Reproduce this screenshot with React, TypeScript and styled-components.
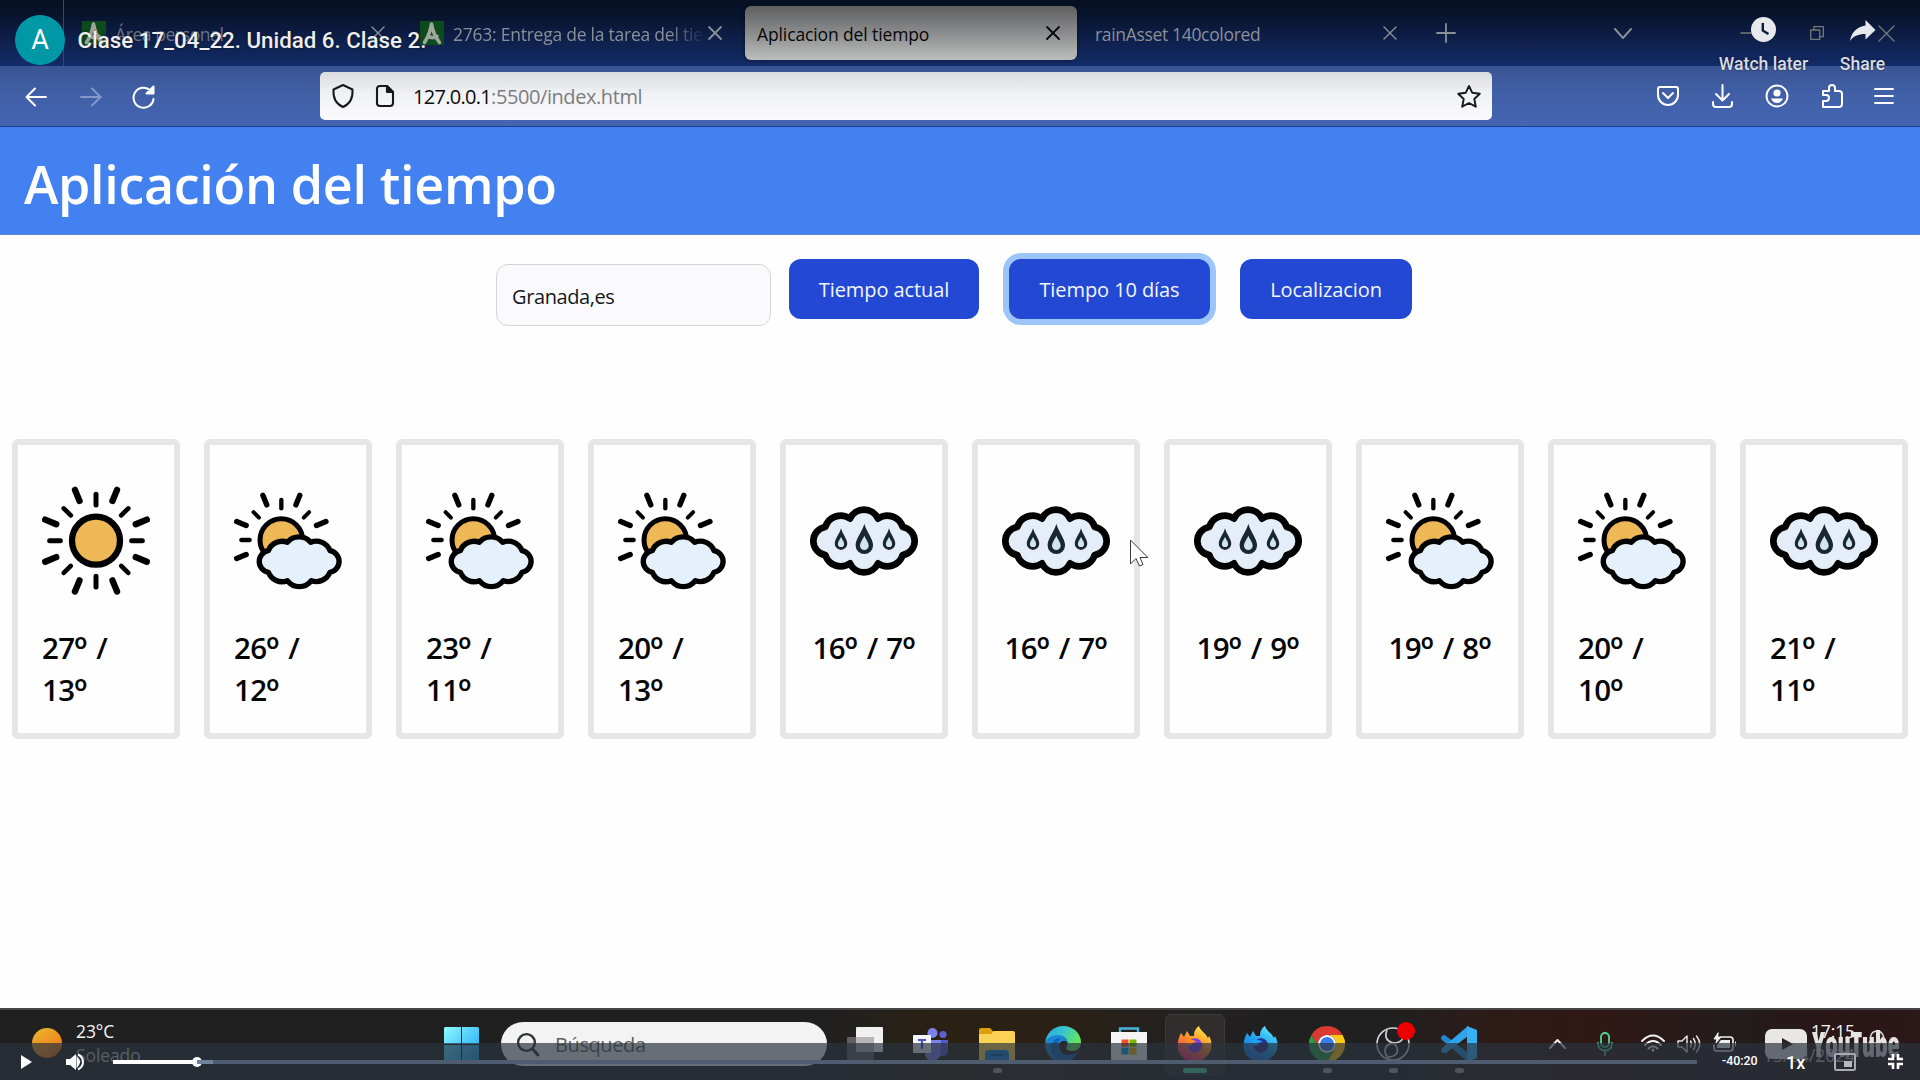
import React from 'react';
import styled, { createGlobalStyle } from 'styled-components';

const ui = '"Open Sans", "Noto Sans", sans-serif';
const player = 'Roboto, "Open Sans", sans-serif';

const Global = createGlobalStyle`
  *, *::before, *::after { box-sizing: border-box; }
  body { margin: 0; background: #fff; font-family: ${ui}; overflow: hidden; }
  svg { display: block; flex: none; overflow: visible; }
`;

const Screen = styled.div`
  position: relative;
  display: flex;
  flex-direction: column;
  width: 1920px;
  height: 1080px;
  overflow: hidden;
  background: #fefefe;
`;

/* ---------- browser tabs ---------- */
const TabStrip = styled.div`
  display: flex;
  align-items: flex-start;
  height: 66px;
  padding-left: 63px;
  background: linear-gradient(#061022 0%, #08142d 22%, #0e1f4a 60%, #132c69 100%);
`;
const Tab = styled.div<{ $w: number; $pad?: number; $active?: boolean; $line?: boolean }>`
  display: flex;
  align-items: center;
  width: ${p => p.$w}px;
  height: ${p => (p.$active ? 54 : 66)}px;
  margin-top: ${p => (p.$active ? 6 : 0)}px;
  padding-left: ${p => p.$pad ?? 12}px;
  border-left: ${p => (p.$line ? '1px solid #36486f' : '0')};
  border-radius: ${p => (p.$active ? 6 : 0)}px;
  background: ${p => (p.$active ? 'linear-gradient(#5f5f60, #8b8c8d 50%, #bcbfbe)' : 'none')};
  box-shadow: ${p => (p.$active ? '0 0 4px rgba(0,0,0,.5)' : 'none')};
  color: ${p => (p.$active ? '#060606' : '#8a909a')};
`;
const TabTitle = styled.span<{ $dim?: boolean; $ls: number; $fade?: boolean }>`
  flex: 1;
  min-width: 0;
  padding-top: 2px;
  overflow: hidden;
  white-space: nowrap;
  font-size: 17.5px;
  line-height: 26px;
  letter-spacing: ${p => p.$ls}px;
  color: ${p => (p.$dim ? '#6d7380' : 'inherit')};
  ${p => p.$fade && 'mask-image: linear-gradient(90deg, #000 86%, transparent 101%);'}
`;
const Favicon = styled.span`
  display: flex;
  align-items: center;
  justify-content: center;
  width: 24px;
  height: 24px;
  margin-right: 9px;
  background: #0d4a1c;
`;
const CloseBox = styled.span<{ $r: number }>`
  margin: 0 ${p => p.$r}px 0 6px;
`;
const StripIcons = styled.div`
  display: flex;
  align-items: center;
  height: 66px;
  flex: 1;
`;
const Gap = styled.span<{ $w: number }>`
  flex: none;
  width: ${p => p.$w}px;
`;

/* ---------- toolbar ---------- */
const Toolbar = styled.div`
  display: flex;
  align-items: center;
  height: 61px;
  padding: 0 27px 0 23px;
  border-bottom: 1px solid #1a3c93;
  background: linear-gradient(#3a5592, #4160a8 50%, #4564b2);
`;
const NavGroup = styled.div`
  display: flex;
  align-items: center;
  gap: 28.5px;
  width: 297px;
  padding-top: 2px;
`;
const UrlBar = styled.div`
  display: flex;
  align-items: center;
  width: 1172px;
  height: 48px;
  padding: 0 11px 0 12px;
  border-radius: 5px;
  background: linear-gradient(#dadddf, #f0f1f4 45%, #fbfbfe);
`;
const Url = styled.span`
  flex: 1;
  margin-left: 19px;
  padding-top: 2px;
  font-size: 20px;
  line-height: 28px;
  letter-spacing: -0.42px;
  color: #7c7d80;
  b { font-weight: 400; color: #0b0b0c; letter-spacing: -0.7px; }
`;
const ToolGroup = styled.div`
  display: flex;
  align-items: center;
  justify-content: space-between;
  flex: 1;
  margin-left: 165px;
`;

/* ---------- page ---------- */
const Page = styled.main`
  display: flex;
  flex-direction: column;
  flex: 1;
`;
const Header = styled.header`
  display: flex;
  align-items: center;
  height: 108px;
  padding: 0 24px;
  background: #4481f0;
  border-bottom: 1px solid #5b85cf;
`;
const Title = styled.h1`
  margin: 6px 0 0;
  font-size: 52px;
  font-weight: 600;
  line-height: 72px;
  letter-spacing: -0.32px;
  color: #fff;
`;
const Controls = styled.form`
  display: flex;
  align-items: flex-start;
  justify-content: flex-start;
  gap: 30px;
  height: 92px;
  padding: 24px 0 0 496px;
`;
const CityInput = styled.div`
  display: flex;
  align-items: center;
  width: 275px;
  height: 62px;
  margin: 5px -12px 0 0;
  padding: 2px 15px 0;
  border: 1px solid #d4d5d9;
  border-radius: 12px;
  background: #fafafd;
  font-size: 20px;
  letter-spacing: -0.4px;
  color: #15181f;
`;
const Button = styled.button<{ $w: number; $focus?: boolean }>`
  width: ${p => p.$w}px;
  height: 60px;
  padding: 1px 0 0;
  border: 0;
  border-radius: 12px;
  background: #2348d3;
  box-shadow: ${p => (p.$focus ? '0 0 0 6px #9cc5f9' : 'none')};
  font: 400 20px ${ui};
  letter-spacing: -0.08px;
  color: #f3f6fd;
`;
const Cards = styled.section`
  display: grid;
  grid-template-columns: repeat(10, 168px);
  gap: 24px;
  padding: 0 12px;
  margin-top: 112px;
`;
const Card = styled.article`
  display: flex;
  flex-direction: column;
  align-items: center;
  height: 300px;
  padding: 42px 24px 0;
  border: 6px solid #e6e6e8;
  border-radius: 6px;
`;
const Temp = styled.p`
  margin: 32px 0 0;
  font-size: 29.5px;
  font-weight: 600;
  line-height: 42px;
  letter-spacing: -0.7px;
  word-spacing: 1.8px;
  color: #050505;
`;
const Ring = styled.span`
  font-size: 1.16em;
  line-height: 0;
  letter-spacing: 0;
  vertical-align: -0.09em;
`;

/* ---------- taskbar ---------- */
const Taskbar = styled.footer`
  display: flex;
  align-items: flex-start;
  height: 72px;
  border-top: 2px solid #464546;
  background: linear-gradient(90deg, #202020 0 43%, #2a2013 49%, #2b2014 54%, #222020 62%, #202020 72%, #2e1b18 78%, #301815 83%, #231c1c 90%, #2b1617 96%, #2c1819 100%);
`;
const Slot = styled.div<{ $ml?: number; $mt?: number }>`
  flex: none;
  margin-left: ${p => p.$ml ?? 0}px;
  margin-top: ${p => p.$mt ?? 0}px;
`;
const SunDot = styled.div`
  width: 30px;
  height: 30px;
  border-radius: 50%;
  background: linear-gradient(150deg, #e8b92c, #f08a20 60%, #e8641e);
`;
const Stack = styled.div<{ $right?: boolean; $mt: number; $ml: number; $w: number }>`
  display: flex;
  flex: none;
  flex-direction: column;
  align-items: ${p => (p.$right ? 'flex-end' : 'flex-start')};
  width: ${p => p.$w}px;
  margin: ${p => p.$mt}px 0 0 ${p => p.$ml}px;
  font-size: 17.5px;
  line-height: 24px;
  letter-spacing: -0.1px;
  color: #f4f4f4;
`;
const Muted = styled.span`
  color: #bdbdbd;
`;
const Search = styled.div`
  display: flex;
  flex: none;
  align-items: center;
  width: 326px;
  height: 44px;
  margin: 12px 0 0 22px;
  padding-left: 16px;
  border-radius: 22px;
  background: #f3f3f3;
  color: #5e6063;
  font-size: 20px;
  letter-spacing: -0.4px;
  gap: 16px;
`;
const Apps = styled.div`
  display: flex;
  margin-left: 15px;
`;
const AppTile = styled.div<{ $open?: boolean; $active?: boolean }>`
  display: flex;
  flex-direction: column;
  align-items: center;
  width: 60px;
  height: 61px;
  margin: 4px 3px 0;
  padding-top: 11px;
  border-radius: 6px;
  background: ${p => (p.$active ? '#302d2c' : 'none')};
  border: 1px solid ${p => (p.$active ? '#3c3939' : 'transparent')};
  &::after {
    content: '';
    width: ${p => (p.$active ? 24 : p.$open ? 9 : 0)}px;
    height: 5px;
    margin-top: 6px;
    border-radius: 3px;
    background: ${p => (p.$active ? '#44d29c' : '#a0a0a0')};
  }
`;
const Tray = styled.div`
  display: flex;
  flex: none;
  align-items: flex-start;
  margin-left: 53px;
`;

/* ---------- video player overlay ---------- */
const Chrome = styled.div`
  position: absolute;
  top: 0;
  left: 15px;
  right: 35px;
  display: flex;
  align-items: flex-start;
  font-family: ${player};
  color: #eeeeee;
`;
const Avatar = styled.div`
  display: flex;
  align-items: center;
  justify-content: center;
  width: 50px;
  height: 50px;
  margin: 15px 12.5px 0 0;
  border-radius: 50%;
  background: #0097a7;
  font-size: 27px;
  color: #fff;
`;
const VideoTitle = styled.span`
  flex: 1;
  margin-top: 25px;
  font-size: 22.3px;
  font-weight: 500;
  line-height: 30px;
  text-shadow: 0 0 2px rgba(0, 0, 0, 0.5);
`;
const Action = styled.div<{ $w: number; $ml?: number }>`
  display: flex;
  flex-direction: column;
  align-items: center;
  width: ${p => p.$w}px;
  margin: 17px 0 0 ${p => p.$ml ?? 0}px;
  font-size: 17.6px;
  font-weight: 500;
  line-height: 24px;
  white-space: nowrap;
  color: #d9dbe0;
  text-shadow: 0 0 2px rgba(0, 0, 0, 0.6);
  svg { margin-bottom: 10px; }
`;
const Brand = styled.div`
  position: absolute;
  left: 1765px;
  top: 1024px;
  display: flex;
  align-items: center;
  gap: 5px;
`;
const Wordmark = styled.span`
  font-size: 35px;
  font-weight: 800;
  font-stretch: 75%;
  line-height: 40px;
  letter-spacing: -0.5px;
  color: #e6e3e3;
  transform: scaleX(0.72);
  transform-origin: left;
`;
const ControlBar = styled.div`
  position: absolute;
  left: 0;
  right: 0;
  bottom: 0;
  height: 37px;
  display: flex;
  align-items: center;
  background: rgba(42, 51, 62, 0.69);
  font-family: ${player};
  color: #fff;
`;
const Track = styled.div`
  display: flex;
  align-items: center;
  width: 1584px;
  height: 4px;
  margin-left: 29px;
  background: #4f5c70;
`;
const Played = styled.i`
  width: 84px;
  height: 4px;
  background: #fff;
`;
const Knob = styled.i`
  width: 10px;
  height: 10px;
  margin: 1px -5px 0;
  border-radius: 50%;
  background: #fff;
`;
const Buffered = styled.i`
  width: 16px;
  height: 4px;
  background: #70829c;
`;
const Remaining = styled.span`
  width: 36px;
  margin: -2px 0 0 25px;
  font-size: 12.4px;
  font-weight: 500;
`;
const Speed = styled.span`
  width: 20px;
  margin: 1px 0 0 28px;
  font-size: 18px;
  font-weight: 500;
`;
const Pointer = styled.div`
  position: absolute;
  left: 1130px;
  top: 540px;
`;

/* ---------- icons ---------- */
const Svg = ({ w, h, vb, sw = 1.8, children }: { w: number; h: number; vb?: string; sw?: number; children: React.ReactNode }) => (
  <svg width={w} height={h} viewBox={vb ?? `0 0 ${w} ${h}`} fill="none" stroke="currentColor" strokeWidth={sw} strokeLinecap="round" strokeLinejoin="round">
    {children}
  </svg>
);
const X = ({ s = 12, sw = 1.8 }: { s?: number; sw?: number }) => (
  <Svg w={s} h={s} vb="0 0 12 12" sw={sw}><path d="M0 0L12 12M12 0L0 12" /></Svg>
);
const Leaf = () => (
  <Svg w={18} h={22} sw={3.6}><path d="M1.5 20.5Q7 12 8.5 2Q10 12 16.5 20.5M5 14Q9 17 14 14.5" stroke="#9fa69d" /></Svg>
);

const rays = (list: number[], a: number, b: number, w: number, cx: number, cy: number) =>
  list.map(d => {
    const t = (d * Math.PI) / 180;
    const s = Math.sin(t), c = -Math.cos(t);
    return <line key={d} x1={cx + a * s} y1={cy + a * c} x2={cx + b * s} y2={cy + b * c} strokeWidth={w} />;
  });

const Sun = () => (
  <Svg w={108} h={108} vb="0 0 324 324">
    <g stroke="#000">
      <circle cx="162" cy="161" r="72" fill="#edb855" strokeWidth="19" />
      {rays([0, 90, 180, 270], 107, 139, 15, 162, 161)}
      {rays([45, 135, 225, 315], 107, 137, 14, 162, 161)}
      {rays([22.5, 67.5, 112.5, 157.5, 202.5, 247.5, 292.5, 337.5], 129, 165, 19, 162, 161)}
    </g>
  </Svg>
);
const SunCloud = () => (
  <Svg w={108} h={108} vb="0 0 324 324">
    <g stroke="#000">
      <circle cx="142" cy="159" r="64" fill="#edb855" strokeWidth="15" />
      {rays([0, 270], 95, 120, 13, 142, 159)}
      {rays([45, 315], 95, 118, 12, 142, 159)}
      {rays([22.5, 67.5, 247.5, 292.5, 337.5], 114, 145, 16, 142, 159)}
      <path d="M160 166A46 46 0 0 1 230 166A44 44 0 0 1 288 191A33 33 0 0 1 288 256A44 44 0 0 1 232 281A45 45 0 0 1 160 281A44 44 0 0 1 103 256A33 33 0 0 1 103 191A44 44 0 0 1 160 166Z" fill="#e5f0fa" strokeWidth="16" />
    </g>
  </Svg>
);
const Drop = ({ x, y, s }: { x: number; y: number; s: number }) => (
  <g transform={`translate(${x} ${y}) scale(${s})`} stroke="none">
    <path d="M0 0C6 24 26 44 26 64A26 26 0 0 1-26 64C-26 44-6 24 0 0Z" fill="#1c2631" />
    <path d="M0 36C4 46 13 56 13 65A13 13 0 0 1-13 65C-13 56-4 46 0 36Z" fill="#cfe6ef" />
  </g>
);
const Rain = () => (
  <Svg w={108} h={108} vb="0 0 324 324">
    <path d="M120 95A46 46 0 0 1 204 95A48 48 0 0 1 278 120A42.500 42.500 0 0 1 278 204A48 48 0 0 1 204 229A46 46 0 0 1 120 229A48 48 0 0 1 46 204A42.500 42.500 0 0 1 46 120A48 48 0 0 1 120 95Z" fill="#e5eef8" stroke="#000" strokeWidth="20" />
    <Drop x={93} y={124} s={0.72} />
    <Drop x={163} y={110} s={1.01} />
    <Drop x={237} y={124} s={0.72} />
  </Svg>
);

const icons = { sun: Sun, cloud: SunCloud, rain: Rain };
const days: [keyof typeof icons, string, string][] = [
  ['sun', '27', '13'], ['cloud', '26', '12'], ['cloud', '23', '11'], ['cloud', '20', '13'], ['rain', '16', '7'],
  ['rain', '16', '7'], ['rain', '19', '9'], ['cloud', '19', '8'], ['cloud', '20', '10'], ['rain', '21', '11'],
];

const Teams = () => (
  <svg width="36" height="36" viewBox="0 0 36 36">
    <circle cx="19.5" cy="7" r="5" fill="#7b83eb" /><circle cx="30" cy="8.500" r="3.600" fill="#5b62c8" />
    <path d="M24 14h11v11a5 5 0 0 1-9 3z" fill="#5059c9" /><path d="M12 14h16v12a8.500 8.500 0 0 1-16 4z" fill="#7b83eb" />
    <rect x="0" y="9" width="18" height="18" rx="1" fill="#f3f3fa" /><path d="M5 14h8M9 14v9" stroke="#4b53bc" strokeWidth="2.200" />
  </svg>
);
const Folder = () => (
  <svg width="36" height="36" viewBox="0 0 36 36">
    <path d="M0 4q0-2 2-2h9l4 4v8H0z" fill="#dd9f0d" /><path d="M0 8h12l3-3h19q2 0 2 2v27H0z" fill="#fbd254" />
    <path d="M6 34v-6q0-4 4-4h16q4 0 4 4v6z" fill="#1583d4" /><path d="M12 29h12" stroke="#0c5ba0" strokeWidth="2" />
  </svg>
);
const Edge = () => (
  <svg width="36" height="36" viewBox="0 0 36 36">
    <defs>
      <linearGradient id="eg" x1="0" y1="0" x2="1" y2="0.4"><stop offset="0" stopColor="#2aa4e4" /><stop offset=".5" stopColor="#37c4d2" /><stop offset="1" stopColor="#65e65a" /></linearGradient>
    </defs>
    <path d="M0 17C1 7 9 0 18 0c11 0 18 8 18 16 0 6-4 9-9 9-4 0-7-2-5-5 2-5-1-10-8-10C7 10 2 12 0 17z" fill="url(#eg)" />
    <path d="M0 18c1-5 6-9 13-9 6 0 9 4 9 7-3-2-7-1-8 3-1 5 3 10 9 10 4 0 8-1 10-3-3 6-9 10-15 10C8 36 0 28 0 18z" fill="#1c86d6" />
    <path d="M13 12c-5 2-8 7-7 13 1 6 6 11 12 11 6 0 12-4 15-10-2 2-6 3-10 3-7 0-11-5-10-10 0-3 1-5 3-6z" fill="#1464b4" />
  </svg>
);
const Store = () => (
  <svg width="36" height="36" viewBox="0 0 36 36">
    <path d="M9 8V2.500h18V8" fill="none" stroke="#46b4dc" strokeWidth="2.400" /><path d="M0 6h36v26q0 4-4 4H4q-4 0-4-4z" fill="#f5f5f5" />
    <path d="M10.500 13.500h7v7h-7z" fill="#f25022" /><path d="M18.500 13.500h7v7h-7z" fill="#7fba00" /><path d="M10.500 21.500h7v7h-7z" fill="#00a4ef" /><path d="M18.500 21.500h7v7h-7z" fill="#ffb900" />
  </svg>
);
const Fox = ({ id, a, b, c, core }: { id: string; a: string; b: string; c: string; core: string }) => (
  <svg width="36" height="36" viewBox="0 0 36 36">
    <defs><linearGradient id={id} x1=".8" y1="0" x2=".3" y2="1"><stop offset="0" stopColor={a} /><stop offset=".5" stopColor={b} /><stop offset="1" stopColor={c} /></linearGradient></defs>
    <path d="M4 7l3 4 3-6 3 5h4c0-5 2-8 5-10 1 4 5 6 7 9l2 3 1-2c4 7 3 14-1 19-6 8-20 9-27 1C-1 24 0 14 4 7z" fill={`url(#${id})`} />
    <circle cx="18" cy="19.500" r="7.200" fill={core} /><path d="M9 15q6-3 11 1-5 0-6 4-4 0-5-5z" fill={b} />
  </svg>
);
const ChromeLogo = () => (
  <svg width="36" height="36" viewBox="0 0 36 36">
    <path d="M2.400 9A18 18 0 0 1 33.600 9H18a9 9 0 0 0-7.800 13.500z" fill="#db3a30" />
    <path d="M33.600 9A18 18 0 0 1 18 36l7.800-13.500A9 9 0 0 0 18 9z" fill="#fbc917" />
    <path d="M18 36A18 18 0 0 1 2.400 9l7.800 13.500a9 9 0 0 0 15.600 0z" fill="#2a9c48" />
    <circle cx="18" cy="18" r="9" fill="#fff" /><circle cx="18" cy="18" r="7" fill="#3a7be8" />
  </svg>
);
const Obs = () => (
  <svg width="36" height="36" viewBox="0 0 36 36">
    <circle cx="18" cy="18" r="16" fill="#1f1e20" stroke="#d5d5d5" strokeWidth="1.600" />
    <path d="M12 4q-4 10 6 13 8 0 10-5M18 17q-7 1-8 7 0 5 4 8M18 17q6 4 4 10-3 4-8 4" fill="none" stroke="#c9c9c9" strokeWidth="1.800" />
    <circle cx="31" cy="5" r="9" fill="#ee0000" />
  </svg>
);
const Code = () => (
  <svg width="36" height="36" viewBox="0 0 36 36">
    <path d="M1 10q2-2 4-0L27 27V36L1 14q-2-2 0-4z" fill="#1f8ad2" />
    <path d="M27 0v10L5 27q-2 1-4-1-2-2 0-4z" fill="#2fa4ea" /><path d="M26 0l10 4v28l-10 4z" fill="#36b0f2" />
  </svg>
);

export default function App() {
  return (
    <Screen>
      <Global />
      <TabStrip>
        <Tab $w={345} $pad={18} $line>
          <Favicon><Leaf /></Favicon>
          <TabTitle $dim $ls={-0.4}>Área personal</TabTitle>
          <CloseBox $r={24}><X sw={1.4} /></CloseBox>
        </Tab>
        <Tab $w={337}>
          <Favicon><Leaf /></Favicon>
          <TabTitle $ls={-0.24} $fade>2763: Entrega de la tarea del tie</TabTitle>
          <CloseBox $r={24}><X /></CloseBox>
        </Tab>
        <Tab $w={332} $active>
          <TabTitle $ls={-0.12}>Aplicacion del tiempo</TabTitle>
          <CloseBox $r={18}><X /></CloseBox>
        </Tab>
        <Tab $w={336} $pad={18}>
          <TabTitle $ls={-0.33}>rainAsset 140colored</TabTitle>
          <CloseBox $r={17}><X sw={1.4} /></CloseBox>
        </Tab>
        <StripIcons>
          <Gap $w={24} />
          <Svg w={18} h={18} sw={1.8}><g stroke="#8a9096"><path d="M9 0V18M0 9H18" /></g></Svg>
          <Gap $w={160} />
          <Svg w={16} h={9} sw={1.9}><path d="M0 0L8 9L16 0" stroke="#8a9096" /></Svg>
          <Gap $w={110} />
          <Svg w={14} h={2} sw={1.3}><path d="M0 1H14" stroke="#747a78" /></Svg>
          <Gap $w={55} />
          <Svg w={14} h={14} sw={1.3}><path d="M.7 4h9v9.400h-9zM4 4V.7h9.300v10H10" stroke="#747a78" /></Svg>
          <Gap $w={55} />
          <Svg w={15} h={15} sw={1.3}><path d="M0 0L15 15M15 0L0 15" stroke="#747a78" /></Svg>
        </StripIcons>
      </TabStrip>

      <Toolbar>
        <NavGroup>
          <Svg w={26} h={22} sw={2}><path d="M3.500 11H23M12 2.500L3.500 11L12 19.500" stroke="#fff" /></Svg>
          <Svg w={26} h={22} sw={2}><path d="M3 11H23M14 2.500L22.500 11L14 19.500" stroke="#8399cb" /></Svg>
          <Svg w={24} h={24} sw={2}><path d="M21.500 14A10 10 0 1 1 18.500 5.500L21 8M21.500 1.500V8.500H14.500Z" stroke="#fff" /><path d="M21.500 2v6.500H15z" fill="#fff" stroke="none" /></Svg>
        </NavGroup>
        <UrlBar>
          <Svg w={22} h={24} sw={2}><path d="M11 1L20.500 5.500C21 13 18 20 11 23C4 20 1 13 1.500 5.500Z" stroke="#17181c" /></Svg>
          <Gap $w={22} />
          <Svg w={18} h={22} sw={2.1}><path d="M11 1H4Q1 1 1 4V18Q1 21 4 21H14Q17 21 17 18V7Z" stroke="#17181c" /><path d="M11 1V7H17Z" fill="#17181c" stroke="#17181c" /></Svg>
          <Url><b>127.0.0.1</b>:5500/index.html</Url>
          <Svg w={24} h={23} sw={1.9}><path d="M12 1L15.300 7.800L22.800 8.800L17.300 14L18.800 21.700L12 18L5.200 21.700L6.700 14L1.200 8.800L8.700 7.800Z" stroke="#17181c" /></Svg>
        </UrlBar>
        <ToolGroup>
          <Svg w={22} h={20} sw={2}><g stroke="#fff"><path d="M3 1H19Q21 1 21 3V9A10 10 0 0 1 1 9V3Q1 1 3 1Z" /><path d="M6 7L11 12L16 7" /></g></Svg>
          <Svg w={21} h={24} sw={2}><path d="M10.500 1V16M4 10L10.500 16.500L17 10M1 18V20Q1 23 4 23H17Q20 23 20 20V18" stroke="#fff" /></Svg>
          <Svg w={24} h={24} sw={1.9}><g stroke="#fff"><circle cx="12" cy="12" r="10.500" /><circle cx="12" cy="9" r="3.600" fill="#fff" stroke="none" /><path d="M6 14.500H18Q16 19 12 19Q8 19 6 14.500Z" fill="#fff" stroke="none" /></g></Svg>
          <Svg w={21} h={24} sw={2}><path d="M1 7H7V4A3 3 0 0 1 13 4V7H17Q20 7 20 10V20Q20 23 17 23H1V17H4A3 3 0 0 0 4 11H1Z" stroke="#fff" /></Svg>
          <Svg w={18} h={17} sw={1.9}><path d="M0 1H18M0 8H18M0 15H18" stroke="#fff" /></Svg>
        </ToolGroup>
      </Toolbar>

      <Page>
        <Header><Title>Aplicación del tiempo</Title></Header>
        <Controls onSubmit={e => e.preventDefault()}>
          <CityInput>Granada,es</CityInput>
          <Button type="button" $w={190}>Tiempo actual</Button>
          <Button type="button" $w={201} $focus>Tiempo 10 días</Button>
          <Button type="button" $w={172}>Localizacion</Button>
        </Controls>
        <Cards>
          {days.map(([kind, hi, lo], i) => {
            const Icon = icons[kind];
            return <Card key={i}><Icon /><Temp>{hi}<Ring>º</Ring> / {lo}<Ring>º</Ring></Temp></Card>;
          })}
        </Cards>
      </Page>

      <Taskbar>
        <Slot $ml={32} $mt={18}><SunDot /></Slot>
        <Stack $mt={9} $ml={14} $w={368}><span>23°C</span><Muted>Soleado</Muted></Stack>
        <Slot $mt={17}>
          <svg width="35" height="35" viewBox="0 0 35 35">
            <defs><linearGradient id="win" x1="0" y1="0" x2="1" y2="1"><stop offset="0" stopColor="#8ffaff" /><stop offset=".5" stopColor="#50cdfa" /><stop offset="1" stopColor="#1d9cea" /></linearGradient></defs>
            <path d="M1 0H17V17H0V1zM18 0H34L35 1V17H18zM0 18H17V35H1L0 34zM18 18H35V34L34 35H18z" fill="url(#win)" />
          </svg>
        </Slot>
        <Search>
          <Svg w={22} h={23} sw={2.4}><g stroke="#2f3236"><circle cx="9.500" cy="9.500" r="8.400" /><path d="M15.500 16L21 22" strokeWidth="3" /></g></Svg>
          Búsqueda
        </Search>
        <Slot $ml={20} $mt={17}>
          <svg width="36" height="36" viewBox="0 0 36 36"><rect x="0" y="10" width="27" height="24" rx="1" fill="#5f5f5f" /><rect x="9" y="0" width="27" height="25" rx="1" fill="#f0f0f0" /><rect x="9" y="10" width="18" height="15" fill="#b5b5b5" /></svg>
        </Slot>
        <Apps>
          <AppTile><Teams /></AppTile>
          <AppTile $open><Folder /></AppTile>
          <AppTile><Edge /></AppTile>
          <AppTile><Store /></AppTile>
          <AppTile $active><Fox id="fx" a="#fff04a" b="#ff8a28" c="#e8267c" core="#7a3fe0" /></AppTile>
          <AppTile><Fox id="fd" a="#5ff0ff" b="#1f9ff0" c="#1c68d8" core="#2a2f8c" /></AppTile>
          <AppTile $open><ChromeLogo /></AppTile>
          <AppTile $open><Obs /></AppTile>
          <AppTile $open><Code /></AppTile>
        </Apps>
        <Tray>
          <Slot $ml={5} $mt={30}><Svg w={15} h={8} sw={1.9}><path d="M0 8L7.500 0L15 8" stroke="#efefef" /></Svg></Slot>
          <Slot $ml={32} $mt={22}><Svg w={16} h={24} sw={1.8}><g stroke="#4fd69c"><rect x="4" y="1" width="8" height="14" rx="4" /><path d="M1 11Q1 18.500 8 18.500Q15 18.500 15 11M8 19V23" /></g></Svg></Slot>
          <Slot $ml={28} $mt={24}><Svg w={24} h={18} sw={2}><g stroke="#f2f2f2"><path d="M1 7Q12-4 23 7M4 11Q12 3 20 11M7.500 14.500Q12 10 16.500 14.500" /><circle cx="12" cy="16" r="1.500" fill="#f2f2f2" stroke="none" /></g></Svg></Slot>
          <Slot $ml={12} $mt={24}><Svg w={24} h={20} sw={1.5}><g stroke="#e4e4e4"><path d="M1 7H5L10 2V18L5 13H1ZM13.500 7Q15.500 10 13.500 13M16.500 4.500Q20 10 16.500 15.500M19.500 2Q26 10 19.500 18" /></g></Svg></Slot>
          <Slot $ml={12} $mt={23}><Svg w={24} h={19} sw={1.7}><g stroke="#efefef"><path d="M8 4H17Q20 4 20 7V15Q20 18 17 18H4Q1 18 1 15V12" /><path d="M8 7H17V15H4V12Z" fill="#efefef" stroke="none" /><path d="M22.500 9V13M5 0L1 6H4L3 10L8 4H5Z" fill="#efefef" strokeWidth="1" /></g></Svg></Slot>
          <Stack $right $mt={9} $ml={22} $w={96}><span>17:15</span><Muted>15/04/2024</Muted></Stack>
          <Slot $ml={13} $mt={18}><Svg w={18} h={20} sw={1.5}><path d="M3 12A6.500 6.500 0 1 1 15 12L17 15H1L3 12M7 18H11" stroke="#d8cfcf" /></Svg></Slot>
        </Tray>
      </Taskbar>

      <Pointer>
        <Svg w={18} h={27} sw={1}><path d="M.5.5V24L6 18.500L9.500 26L13 24.500L10 17.500H17.500Z" fill="#fff" stroke="#3a3a3c" /></Svg>
      </Pointer>

      <Chrome>
        <Avatar>A</Avatar>
        <VideoTitle>Clase 17_04_22. Unidad 6. Clase 2.</VideoTitle>
        <Action $w={89}>
          <svg width="25" height="25" viewBox="0 0 25 25"><circle cx="12.500" cy="12.500" r="12.500" fill="#e7e9ee" /><path d="M11.800 6V13.500L17.500 17" fill="none" stroke="#0c1a3c" strokeWidth="2.400" /></svg>
          Watch later
        </Action>
        <Action $w={45} $ml={32}>
          <svg width="25" height="25" viewBox="0 0 25 25"><path d="M15.500 3L25.500 13L15.500 22.500V17C8 17 3.500 19 0 24C1.500 15 7 10 15.500 8.500Z" fill="#e7e9ee" /></svg>
          Share
        </Action>
      </Chrome>

      <Brand>
        <svg width="42" height="30" viewBox="0 0 42 30"><rect width="42" height="30" rx="7" fill="#e9e6e6" /><path d="M17 9L28 15L17 21Z" fill="#2b2224" /></svg>
        <Wordmark>YouTube</Wordmark>
      </Brand>
      <ControlBar>
        <Gap $w={21} />
        <svg width="11" height="14" viewBox="0 0 11 14"><path d="M0 0L11 7L0 14Z" fill="#fff" /></svg>
        <Gap $w={34} />
        <svg width="18" height="18" viewBox="0 0 18 18"><path d="M0 6H4L10 1V17L4 12H0Z" fill="#fff" /><path d="M11.500 5.500Q14.500 9 11.500 12.500ZM12 1.500Q17 4 17 9Q17 14 12 16.500" fill="none" stroke="#fff" strokeWidth="2" /></svg>
        <Track><Played /><Knob /><Buffered /></Track>
        <Remaining>-40:20</Remaining>
        <Speed>1x</Speed>
        <Gap $w={28} />
        <svg width="22" height="18" viewBox="0 0 22 18"><rect x="1" y="1" width="20" height="16" rx="1.500" fill="none" stroke="#a9abb0" strokeWidth="2" /><rect x="10" y="8" width="8" height="6" fill="#b7b9bd" /></svg>
        <Gap $w={32} />
        <svg width="15" height="15" viewBox="0 0 15 15"><path d="M5 0V5H0M10 0V5H15M5 15V10H0M10 15V10H15" fill="none" stroke="#fff" strokeWidth="2.600" /></svg>
      </ControlBar>
    </Screen>
  );
}
